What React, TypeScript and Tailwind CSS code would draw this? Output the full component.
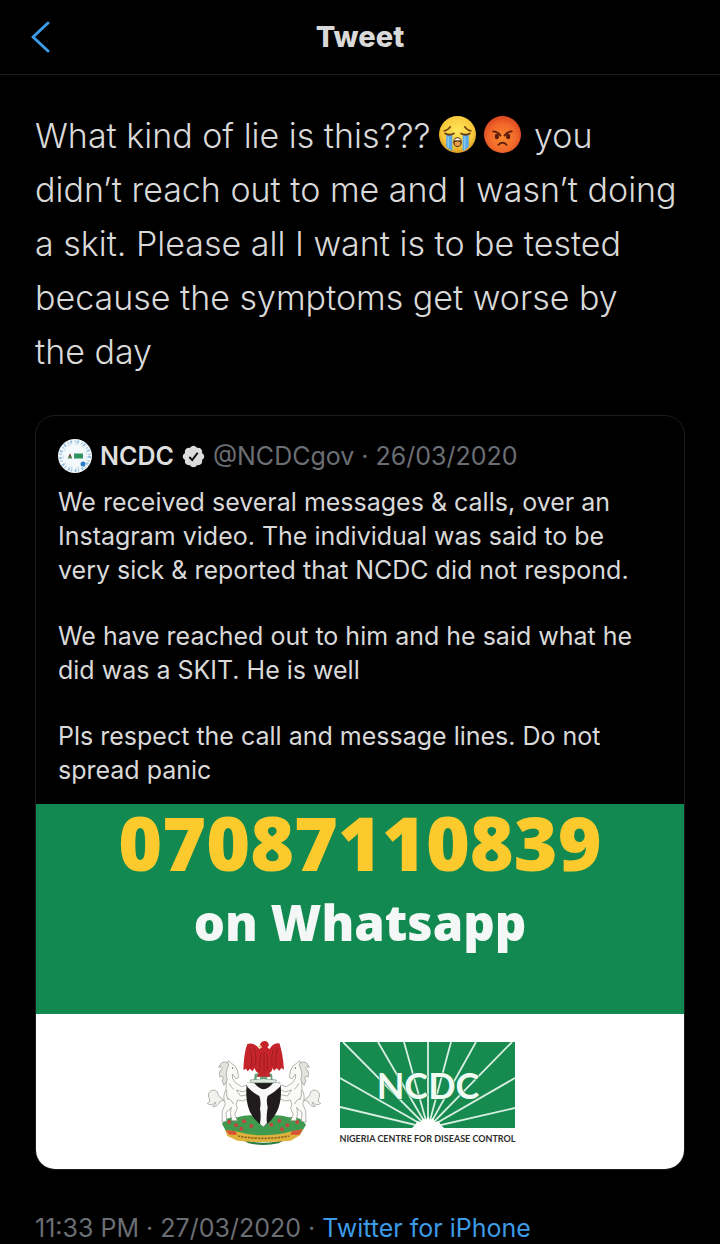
import type { ReactNode } from 'react'

const QUOTE_PARAGRAPHS = [
  ['We received several messages & calls, over an', 'Instagram video. The individual was said to be', 'very sick & reported that NCDC did not respond.'],
  ['We have reached out to him and he said what he', 'did was a SKIT. He is well'],
  ['Pls respect the call and message lines. Do not', 'spread panic']
]

// Ends of the white rays, all starting at the bottom centre of the logo
const RAYS = [
  [0, 65], [0, 36], [3, 0], [38, 0], [64, 0], [88, 0],
  [111, 0], [136, 0], [172, 0], [175, 36], [175, 66]
]

function CryingEmoji() {
  return (
    <svg role="img" aria-label="Loudly crying face" viewBox="0 0 36 36" className="inline-block w-[37px] h-[37px] mx-2 align-[-5px]">
      <defs>
        <radialGradient id="cry" cx="50%" cy="40%" r="60%">
          <stop offset="0" stopColor="#ffe65c" />
          <stop offset="0.7" stopColor="#f8c93a" />
          <stop offset="1" stopColor="#d99a22" />
        </radialGradient>
      </defs>
      <circle cx="18" cy="18" r="18" fill="url(#cry)" />
      <path d="M7 18.500h6v15.500q-3.200-1-6-4z" fill="#5aa9e6" />
      <path d="M23 18.500h6v11.500q-2.800 3-6 4z" fill="#5aa9e6" />
      <path d="M9 20v11M25 20v13" stroke="#86c4f0" strokeWidth="1.500" />
      <path d="M5 14.500q3.500-.5 6-4M31 14.500q-3.500-.5-6-4" stroke="#7a4a12" strokeWidth="1.600" fill="none" strokeLinecap="round" />
      <path d="M6 17q4 2.500 8.500 0M21.500 17q4.500 2.500 8.500 0" stroke="#6b3d10" strokeWidth="1.700" fill="none" strokeLinecap="round" />
      <ellipse cx="18" cy="25.500" rx="4.200" ry="4.800" fill="#6a3a12" />
      <path d="M14.600 23.500q3.400-3.500 6.800 0z" fill="#fff" />
      <ellipse cx="18" cy="27" rx="2.800" ry="2.200" fill="#e8a04c" />
    </svg>
  )
}

function AngryEmoji() {
  return (
    <svg role="img" aria-label="Pouting face" viewBox="0 0 36 36" className="inline-block w-[37px] h-[37px] mr-1 align-[-5px]">
      <defs>
        <radialGradient id="angry" cx="50%" cy="58%" r="60%">
          <stop offset="0" stopColor="#f98a2e" />
          <stop offset="0.6" stopColor="#f2682a" />
          <stop offset="1" stopColor="#d8431f" />
        </radialGradient>
      </defs>
      <circle cx="18" cy="18" r="18" fill="url(#angry)" />
      <path d="M9 15q5 .5 7 4M27 15q-5 .5-7 4" stroke="#5c1d0c" strokeWidth="1.800" fill="none" strokeLinecap="round" />
      <ellipse cx="12.500" cy="20" rx="2" ry="2.700" fill="#5c1d0c" />
      <ellipse cx="23.500" cy="20" rx="2" ry="2.700" fill="#5c1d0c" />
      <path d="M14 28q4-4 8 0" stroke="#5c1d0c" strokeWidth="1.700" fill="none" strokeLinecap="round" />
    </svg>
  )
}

function Avatar() {
  return (
    <svg role="img" aria-label="NCDC" viewBox="0 0 34 34" className="size-[34px] shrink-0">
      <circle cx="17" cy="17" r="17" fill="#f4f9fb" />
      <circle cx="17" cy="17" r="14.500" fill="none" stroke="#9cc3de" strokeWidth="3" strokeDasharray="2 2.500 1 1.500" />
      <circle cx="17" cy="17" r="12" fill="none" stroke="#c5dcec" strokeWidth="1" strokeDasharray="3 4" />
      <path d="M11 18.500v-2.500l1-1.500 1 1.500v2.500z" fill="#8b3a34" />
      <path d="M10 17.500h4v2h-4z" fill="#4c8a4d" />
      <rect x="16" y="14.500" width="9" height="5" fill="#2f9460" />
      <circle cx="25" cy="25" r="2.500" fill="#2b7ec6" />
    </svg>
  )
}

function VerifiedBadge() {
  return (
    <svg role="img" aria-label="Verified account" viewBox="1 1 22 22" className="size-[23px] shrink-0">
      <path
        fill="#dcdcdc"
        d="M22.250 12c0-1.430-.88-2.670-2.190-3.340.46-1.390.2-2.900-.81-3.910s-2.520-1.270-3.910-.81c-.66-1.310-1.910-2.190-3.340-2.190s-2.670.88-3.330 2.190c-1.400-.46-2.910-.2-3.920.81s-1.260 2.520-.8 3.910c-1.310.67-2.200 1.910-2.200 3.340s.89 2.670 2.200 3.340c-.46 1.390-.21 2.900.8 3.910s2.520 1.260 3.910.81c.67 1.310 1.910 2.190 3.340 2.190s2.680-.88 3.340-2.190c1.390.45 2.900.2 3.910-.81s1.270-2.520.81-3.910c1.310-.67 2.190-1.910 2.190-3.340z"
      />
      <path d="M8 12.500l2.800 2.900 5.200-7" fill="none" stroke="#000" strokeWidth="1.800" />
    </svg>
  )
}

function Horse() {
  return (
    <g stroke="#8f9089" strokeWidth="2" strokeLinejoin="round">
      <path d="M76 210Q56 205 54 190Q48 176 34 182Q20 190 28 206Q33 216 22 220Q34 230 48 216Q44 226 38 230Q54 230 60 214z" fill="#f1f1ee" />
      <path
        d="M86 92l8 8Q108 106 112 120L116 142L108 147L97 132Q94 145 106 158L125 170L145 164L153 174L129 186L109 180L122 198L143 194L149 205L128 213L113 210Q105 222 112 236L104 252L112 272L96 272L91 250L94 232Q87 242 78 247L80 274L66 276L67 242L76 222Q66 200 78 178Q82 158 74 142Q66 118 80 101z"
        fill="#fafaf7"
      />
      <path d="M84 98Q64 90 56 112Q66 108 68 114Q54 124 60 142Q67 134 70 142Q62 154 72 166L82 150Q74 128 86 106z" fill="#e4e4df" />
      <path d="M88 160Q92 172 102 178M84 205Q96 210 100 222M80 180Q78 196 84 210" fill="none" />
      <circle cx="98" cy="114" r="2" fill="#444" stroke="none" />
    </g>
  )
}

function CoatOfArms() {
  return (
    <svg role="img" aria-label="Coat of arms of Nigeria" viewBox="15 0 375 360" className="w-[125px] h-[120px] shrink-0">
      <path d="M66 282Q76 258 112 262Q150 250 188 262Q228 250 266 262Q300 256 318 284L300 314Q190 350 84 314z" fill="#3f9a50" />
      <g fill="#c3463c">
        {[[88, 276], [108, 286], [132, 274], [154, 288], [214, 284], [238, 272], [262, 286], [292, 276], [124, 296], [246, 298]].map(([x, y]) => (
          <circle key={`${x}-${y}`} cx={x} cy={y} r="6" />
        ))}
      </g>
      <path d="M120 326Q190 350 262 326L236 340Q190 350 146 340z" fill="#2b7f43" />
      <path d="M76 300L106 304Q190 328 276 304L308 298L300 316L272 332Q190 340 112 332L82 318z" fill="#e0b23c" />
      <path d="M76 300L106 304L112 314L88 314zM308 298L276 304L270 314L298 314z" fill="#d65336" />
      <path d="M114 318Q190 332 268 318" fill="none" stroke="#8f6a20" strokeWidth="5" strokeDasharray="7 3" />
      <Horse />
      <g transform="translate(384 0) scale(-1 1)">
        <Horse />
      </g>
      <path d="M141 158H241Q248 210 230 246Q216 274 190 290Q162 272 149 244Q134 206 141 158z" fill="#201b1c" />
      <path d="M138 158L162 158Q176 176 191 178Q206 176 220 158L244 160L240 170Q222 188 203 198Q198 210 203 232Q198 262 201 280L190 290L180 282Q184 256 180 236Q184 216 178 198Q158 188 143 172z" fill="#f8f8f8" />
      <path d="M150 150Q190 142 230 150L226 158H154z" fill="#dfe8df" stroke="#7e8f83" strokeWidth="2" />
      <path d="M164 132Q190 124 216 132L218 150Q190 144 162 150z" fill="#66a37c" />
      <path d="M170 140h10v8h-10zM202 140h10v8h-10z" fill="#fff" />
      <path
        d="M180 44Q184 32 196 33Q205 35 207 46L202 51L208 58Q220 36 238 40Q248 66 252 119L244 114L238 122L230 115L222 122L218 114Q216 126 208 130L212 140H170L177 130Q166 126 164 114L157 124L150 116L143 124L138 116L130 120Q132 66 142 42Q164 36 178 57L186 52z"
        fill="#c5242b"
      />
      <path d="M150 56Q158 84 154 112M164 56Q170 80 166 106M232 56Q224 84 228 112M218 60Q214 80 216 106M182 72L178 124M192 66V132M201 72L204 124" stroke="#a01c24" strokeWidth="3" fill="none" />
      <path d="M182 46l-9 4 10 3z" fill="#e4b63c" />
    </svg>
  )
}

function NcdcLogo() {
  return (
    <div className="mt-3 flex w-[175px] flex-col items-center">
      <svg role="img" aria-label="NCDC logo" viewBox="0 0 175 86" className="w-[175px] h-[86px]">
        <rect width="175" height="86" fill="#178a50" />
        {RAYS.map(([x, y]) => (
          <line key={`${x}-${y}`} x1="88" y1="86" x2={x} y2={y} stroke="#d8f0e2" strokeWidth="1.800" />
        ))}
        <path d="M72 86l4-4 1-3 4 1 2-4 3 2 2-4 2 4 3-2 2 4 4-1 1 3 4 4z" fill="#fff" />
        <text
          x="88"
          y="57"
          textAnchor="middle"
          fill="#f0fbf4"
          stroke="#178a50"
          strokeWidth="1"
          paintOrder="stroke"
          className="font-[Lato,sans-serif] text-[36px] font-bold"
        >
          NCDC
        </text>
      </svg>
      <p className="mt-1 font-[Lato,sans-serif] text-[9px] leading-[14px] font-bold text-[#2e2e2e] whitespace-nowrap">
        NIGERIA CENTRE FOR DISEASE CONTROL
      </p>
    </div>
  )
}

function Flyer() {
  return (
    <div className="mt-[17px] text-center font-['Open_Sans',sans-serif] font-extrabold">
      <div className="h-[210px] bg-[#118950]">
        <p className="text-[75px] leading-[76px] text-[#fdca2e]">07087110839</p>
        <p className="mt-[10px] text-[49px] leading-[64px] text-[#f3f8f6]">on Whatsapp</p>
      </div>
      <div className="flex h-[155px] items-start justify-center gap-[10px] bg-white pt-4">
        <CoatOfArms />
        <NcdcLogo />
      </div>
    </div>
  )
}

function Quote({ children }: { children: ReactNode }) {
  return (
    <article className="mt-[36px] overflow-hidden rounded-[20px] border border-[#1c1c1c] pt-[23px]">
      <div className="flex items-center px-[22px] text-[25px] leading-[34px]">
        <Avatar />
        <span className="ml-2 font-semibold text-[#dedede]">NCDC</span>
        <span className="ml-2 flex"><VerifiedBadge /></span>
        <span className="ml-2 whitespace-nowrap text-[#6b6e73]">@NCDCgov · 26/03/2020</span>
      </div>
      {children}
      <Flyer />
    </article>
  )
}

export default function App() {
  return (
    <div className="min-h-screen bg-black font-[Inter,sans-serif] text-[#d9d9d9]">
      <header className="grid grid-cols-[60px_1fr_60px] items-center border-b border-[#1d1d1d] h-[75px]">
        <button type="button" aria-label="Back" className="flex h-full items-center pl-[31px]">
          <svg viewBox="0 0 19 32" className="w-[19px] h-8" fill="none" stroke="#3d9be6" strokeWidth="3" strokeLinecap="round" strokeLinejoin="round">
            <path d="M17 2L2 16l15 14" />
          </svg>
        </button>
        <h1 className="text-center text-[29px] leading-9 font-extrabold">Tweet</h1>
      </header>

      <main className="px-[35px] pt-[34px]">
        <p className="text-[34px] leading-[54px] font-light whitespace-nowrap">
          What kind of lie is this???<CryingEmoji /><AngryEmoji /> you
          <br />
          didn’t reach out to me and I wasn’t doing
          <br />
          a skit. Please all I want is to be tested
          <br />
          because the symptoms get worse by
          <br />
          the day
        </p>

        <Quote>
          <div className="mt-3 flex flex-col gap-8 px-[22px] text-[25px] leading-[34px]">
            {QUOTE_PARAGRAPHS.map((lines) => (
              <p key={lines[0]}>
                {lines.map((line) => (
                  <span key={line} className="block whitespace-nowrap">{line}</span>
                ))}
              </p>
            ))}
          </div>
        </Quote>

        <p className="mt-[43px] text-[25px] leading-[30px] text-[#6b6e73]">
          11:33 PM · 27/03/2020 · <a href="#" className="text-[#3d9be6]">Twitter for iPhone</a>
        </p>
      </main>
    </div>
  )
}
